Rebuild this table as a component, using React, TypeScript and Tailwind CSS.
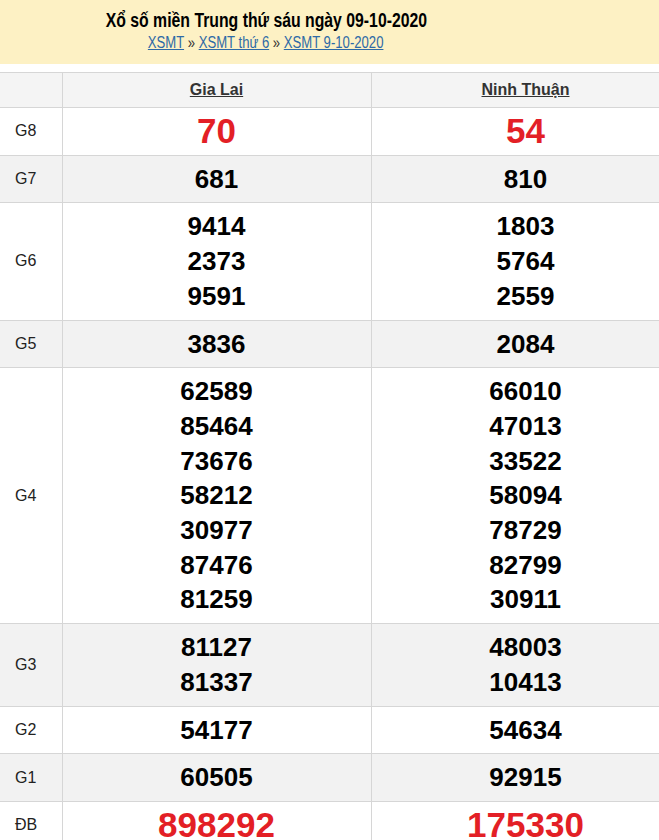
import React from "react";

type Row = { label: string; a: string[]; b: string[]; gray?: boolean; red?: boolean };

const rows: Row[] = [
  { label: "G8", a: ["70"], b: ["54"], red: true },
  { label: "G7", a: ["681"], b: ["810"], gray: true },
  { label: "G6", a: ["9414", "2373", "9591"], b: ["1803", "5764", "2559"] },
  { label: "G5", a: ["3836"], b: ["2084"], gray: true },
  {
    label: "G4",
    a: ["62589", "85464", "73676", "58212", "30977", "87476", "81259"],
    b: ["66010", "47013", "33522", "58094", "78729", "82799", "30911"],
  },
  { label: "G3", a: ["81127", "81337"], b: ["48003", "10413"], gray: true },
  { label: "G2", a: ["54177"], b: ["54634"] },
  { label: "G1", a: ["60505"], b: ["92915"], gray: true },
  { label: "ĐB", a: ["898292"], b: ["175330"], red: true },
];

const font = { fontFamily: "'Liberation Sans', Arial, sans-serif" };

function Nums({ items, red }: { items: string[]; red?: boolean }) {
  return (
    <div className="flex flex-col items-center">
      {items.map((n, i) => (
        <div
          key={i}
          className={
            red
              ? "text-[35px] leading-[34.7px] font-bold text-[#e31f26]"
              : "text-[26px] leading-[34.7px] font-bold text-black"
          }
        >
          {n}
        </div>
      ))}
    </div>
  );
}

export default function App() {
  return (
    <div className="w-[659px] h-[840px] overflow-hidden bg-white" style={font}>
      <div className="h-[64px] bg-[#fdf1c4] flex">
        <div className="w-[532px] flex flex-col items-center justify-center pb-[2px]">
          <div className="text-[20px] leading-[24px] font-bold text-black whitespace-nowrap scale-x-[0.79]">
            Xổ số miền Trung thứ sáu ngày 09-10-2020
          </div>
          <div className="text-[16px] leading-[22px] text-[#333] whitespace-nowrap scale-x-[0.82]">
            <a className="text-[#2e6aa6] underline">XSMT</a> »{" "}
            <a className="text-[#2e6aa6] underline">XSMT thứ 6</a> »{" "}
            <a className="text-[#2e6aa6] underline">XSMT 9-10-2020</a>
          </div>
        </div>
      </div>
      <div className="mt-[8px] w-[680px]">
        <table className="w-[680px] border-collapse table-fixed">
          <colgroup>
            <col className="w-[62px]" />
            <col className="w-[309px]" />
            <col className="w-[309px]" />
          </colgroup>
          <thead>
            <tr className="bg-[#f4f4f4] h-[35px]">
              <th className="border border-[#d6d6d6] border-l-0"></th>
              <th className="border border-[#d6d6d6] text-[16px] font-bold text-[#333] underline">Gia Lai</th>
              <th className="border border-[#d6d6d6] text-[16px] font-bold text-[#333] underline">Ninh Thuận</th>
            </tr>
          </thead>
          <tbody>
            {rows.map((r) => (
              <tr key={r.label} className={r.gray ? "bg-[#f2f2f2]" : "bg-white"}>
                <td className="border border-[#d6d6d6] border-l-0 pl-[15px] text-[16px] text-[#222] align-middle">
                  {r.label}
                </td>
                <td className="border border-[#d6d6d6] py-[6px] align-middle">
                  <Nums items={r.a} red={r.red} />
                </td>
                <td className="border border-[#d6d6d6] py-[6px] align-middle">
                  <Nums items={r.b} red={r.red} />
                </td>
              </tr>
            ))}
          </tbody>
        </table>
      </div>
    </div>
  );
}
